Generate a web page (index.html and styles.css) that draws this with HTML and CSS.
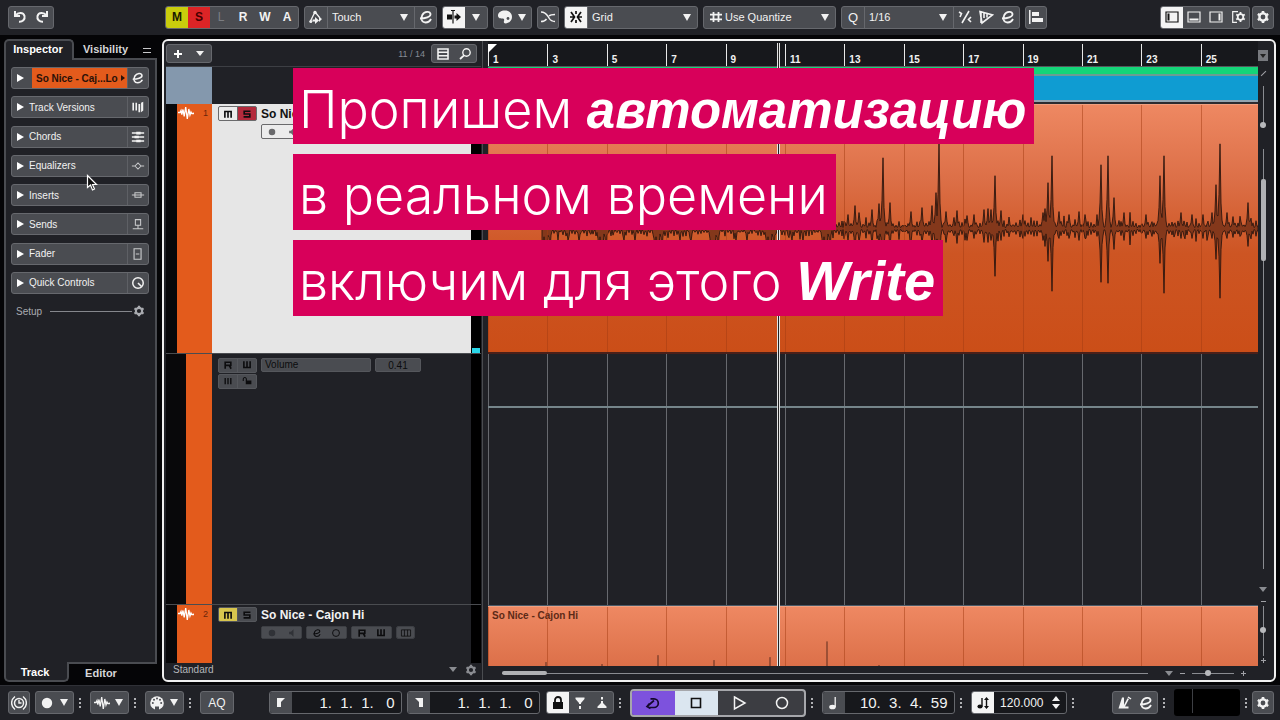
FILE: index.html
```html
<!DOCTYPE html>
<html lang="ru">
<head>
    <meta charset="UTF-8">
    <meta name="viewport" content="width=device-width, initial-scale=1.0">
    <title>Project</title>
    <link rel="stylesheet" href="styles.css">
</head>
<body>

<!-- Icon set -->
<svg class="sprite" aria-hidden="true">
    <symbol id="i-undo" viewBox="0 0 16 16"><path d="M3 2v5h5M3.500 6.500C6 3 11.500 3 12.500 7c.8 3.500-2 6-5.500 5.800" fill="none" stroke="currentColor" stroke-width="2"/></symbol>
    <symbol id="i-redo" viewBox="0 0 16 16"><path d="M13 2v5H8M12.500 6.500C10 3 4.500 3 3.500 7c-.8 3.500 2 6 5.500 5.800" fill="none" stroke="currentColor" stroke-width="2"/></symbol>
    <symbol id="i-edit" viewBox="0 0 16 16"><path d="M2 9.500C7 9.500 13 8 12.500 5 12 2 6.500 2 4.300 6 2.300 10 4 13.500 7.500 13.500c2.500 0 4.500-1.500 5.500-3.500" fill="none" stroke="currentColor" stroke-width="1.800"/></symbol>
    <symbol id="i-auto" viewBox="0 0 16 16"><path d="M2 13L7 3l5 6" fill="none" stroke="currentColor" stroke-width="1.300"/><circle cx="7" cy="3.500" r="1.700" fill="currentColor"/><circle cx="2.800" cy="12.500" r="1.500" fill="currentColor"/><path d="M7 8v2.500H4.500v2H7V15l4-3.500zM11 8l3 2-3 3z" fill="currentColor"/></symbol>
    <symbol id="i-scroll" viewBox="0 0 16 16"><path d="M1 5.500h5v5H1zM8.500 6.500h2V4l4.500 4-4.500 4V9.500h-2z" fill="currentColor"/><path d="M5 1.500h4M7 1.500v13" stroke="currentColor" stroke-width="1.200"/></symbol>
    <symbol id="i-palette" viewBox="0 0 16 16"><path d="M1 6.500C1 3.500 4 1.500 8 1.500c4.500 0 7 3 7 6.500s-3 6.500-6.500 6.500c-1.500 0-2-1-1.500-2.500s0-2.500-1.500-2.500S1 9.500 1 6.500z" fill="currentColor"/><circle cx="11" cy="9.500" r="1.400" fill="#4c4e53"/></symbol>
    <symbol id="i-fade" viewBox="0 0 16 16"><path d="M1 3c5 0 6 3 8 6 1.500 2.500 3 3.500 6 3.500M1 12.500c3 0 4.500-1 5.500-2.500M9 7C10.500 5.500 12 5.500 15 5.500" fill="none" stroke="currentColor" stroke-width="1.400"/></symbol>
    <symbol id="i-snap" viewBox="0 0 16 16"><path d="M8 2v3M8 11v3M3 3l3.500 5L3 13M13 3L9.500 8l3.500 5M2 8h4M10 8h4" fill="none" stroke="currentColor" stroke-width="1.700"/></symbol>
    <symbol id="i-grid" viewBox="0 0 16 16"><path d="M5.500 3v10M10.500 3v10M2 5.700h12M2 10.300h12" stroke="currentColor" stroke-width="1.800"/></symbol>
    <symbol id="i-swing" viewBox="0 0 16 16"><path d="M12 2L5 14M2 3l2.500 1.500L3 8M14 8l-2.500 2.500L14 13" fill="none" stroke="currentColor" stroke-width="1.600"/></symbol>
    <symbol id="i-quant" viewBox="0 0 16 16"><path d="M2 2.500l12.500 3.500L4 14zM3 2v12M6 4v5M9 4.500v4" fill="none" stroke="currentColor" stroke-width="1.600"/></symbol>
    <symbol id="i-align" viewBox="0 0 16 16"><path d="M1.800 1v14" stroke="currentColor" stroke-width="1.500"/><path d="M4 3h7v4H4zM4 9h11v4H4z" fill="currentColor"/></symbol>
    <symbol id="i-left" viewBox="0 0 16 16"><path d="M2 3h12v10H2z" fill="none" stroke="currentColor" stroke-width="1.200"/><path d="M3.500 4.500h2v7h-2z" fill="currentColor"/></symbol>
    <symbol id="i-bottom" viewBox="0 0 16 16"><path d="M2 3h12v10H2z" fill="none" stroke="currentColor" stroke-width="1.200"/><path d="M3.500 9.500h9v2h-9z" fill="currentColor"/></symbol>
    <symbol id="i-right" viewBox="0 0 16 16"><path d="M2 3h12v10H2z" fill="none" stroke="currentColor" stroke-width="1.200"/><path d="M10.500 4.500h2v7h-2z" fill="currentColor"/></symbol>
    <symbol id="i-gear" viewBox="0 0 16 16"><circle cx="8" cy="8" r="3.600" fill="none" stroke="currentColor" stroke-width="2.400"/><path d="M8 2v2M8 12v2M2.800 5l1.700 1M11.500 10l1.700 1M2.800 11l1.700-1M11.500 6l1.700-1" stroke="currentColor" stroke-width="2.600"/></symbol>
    <symbol id="i-winset" viewBox="0 0 16 16"><path d="M8 2.700H2.700v10.600H7" fill="none" stroke="currentColor" stroke-width="1.200"/><circle cx="10.500" cy="8" r="2.800" fill="none" stroke="currentColor" stroke-width="1.800"/><path d="M10.500 3v2M10.500 11v2M6.200 5.500l1.800 1M13 9.500l1.800 1M6.200 10.500l1.800-1M13 6.500l1.800-1" stroke="currentColor" stroke-width="1.800"/></symbol>
    <symbol id="i-versions" viewBox="0 0 16 16"><path d="M2.500 3v9M6 3v9" stroke="currentColor" stroke-width="1.800"/><path d="M8.500 4.500h2V14h-2zM11.500 3L14 2v10l-2.500 2z" fill="currentColor"/></symbol>
    <symbol id="i-chords" viewBox="0 0 16 16"><path d="M1 3.500h14M1 8h14M1 12.500h14" stroke="currentColor" stroke-width="1.800"/><path d="M6 2h5v3H6zM4 6.500h5v3H4zM6 11h5v3H6z" fill="currentColor"/></symbol>
    <symbol id="i-eq" viewBox="0 0 16 16"><path d="M1 8h3.500L8 4.500 11.500 8H15M4.500 8L8 11.500 11.500 8" fill="none" stroke="currentColor" stroke-width="1.200"/></symbol>
    <symbol id="i-insert" viewBox="0 0 16 16"><path d="M1 8h3.500M11.500 8H15M4.500 5.500h7v5h-7zM4.500 8h7" fill="none" stroke="currentColor" stroke-width="1.200"/></symbol>
    <symbol id="i-send" viewBox="0 0 16 16"><path d="M5 3h6v6.500H5zM8 9.500v3.500M2 13.500h12" fill="none" stroke="currentColor" stroke-width="1.200"/></symbol>
    <symbol id="i-fader" viewBox="0 0 16 16"><path d="M3.500 2h8v12h-8zM5.500 8h4" fill="none" stroke="currentColor" stroke-width="1.300"/></symbol>
    <symbol id="i-knob" viewBox="0 0 16 16"><circle cx="8" cy="8" r="6" fill="none" stroke="currentColor" stroke-width="1.700"/><path d="M8 8l4 4" stroke="currentColor" stroke-width="1.800"/></symbol>
    <symbol id="i-wave" viewBox="0 0 16 16"><path d="M0 7.500h2l1-2 .8 4 1.200-5 1.200 7L7.700 2l1.600 12L10.800 4l1.200 6 1-3 .8 1.500H16v-1" fill="none" stroke="currentColor" stroke-width="1.300"/></symbol>
    <symbol id="i-list" viewBox="0 0 16 16"><path d="M3 3h10v10H3zM3 6.300h10M3 9.700h10" fill="none" stroke="currentColor" stroke-width="1.600"/></symbol>
    <symbol id="i-search" viewBox="0 0 16 16"><circle cx="9.500" cy="6.500" r="3.700" fill="none" stroke="currentColor" stroke-width="1.400"/><path d="M7 9.300L3 13" stroke="currentColor" stroke-width="1.800"/></symbol>
    <symbol id="i-clock" viewBox="0 0 16 16"><circle cx="8" cy="8" r="4.500" fill="none" stroke="currentColor" stroke-width="1.500"/><path d="M8 5v3h2.500M4 1.500C-.5 5-.5 11 4 14.500M12 1.500c4.500 3.500 4.500 9.500 0 13" fill="none" stroke="currentColor" stroke-width="1.400"/></symbol>
    <symbol id="i-dot" viewBox="0 0 16 16"><circle cx="8" cy="8" r="5.200" fill="currentColor"/></symbol>
    <symbol id="i-ring" viewBox="0 0 16 16"><circle cx="8" cy="8" r="5.500" fill="none" stroke="currentColor" stroke-width="1.500"/></symbol>
    <symbol id="i-midi" viewBox="0 0 16 16"><circle cx="8" cy="8" r="6.800" fill="currentColor"/><g fill="#4c4e53"><circle cx="3.800" cy="8" r="1"/><circle cx="5" cy="4.800" r="1"/><circle cx="8" cy="3.500" r="1"/><circle cx="11" cy="4.800" r="1"/><circle cx="12.200" cy="8" r="1"/><path d="M6 11.500h4V15H6z"/></g></symbol>
    <symbol id="i-locl" viewBox="0 0 16 16"><path d="M4 3h8L8 7v5H4z" fill="currentColor"/></symbol>
    <symbol id="i-locr" viewBox="0 0 16 16"><path d="M12 3H4l4 4v5h4z" fill="currentColor"/></symbol>
    <symbol id="i-lock" viewBox="0 0 16 16"><path d="M3 7h10v7H3z" fill="currentColor"/><path d="M5 7.500V5a3 3 0 0 1 6 0v2.500" fill="none" stroke="currentColor" stroke-width="1.800"/></symbol>
    <symbol id="i-unlock" viewBox="0 0 16 16"><path d="M6 7h9v6H6z" fill="currentColor"/><path d="M2 8V5a2.500 2.500 0 0 1 5 0v3" fill="none" stroke="currentColor" stroke-width="1.700"/></symbol>
    <symbol id="i-punchin" viewBox="0 0 16 16"><path d="M3.500 2.500h9v1.500L9 8v1H7V8L3.500 4zM7 11h2v3H7z" fill="currentColor"/></symbol>
    <symbol id="i-punchout" viewBox="0 0 16 16"><path d="M7 2h2v2.500H7zM7 6h2v2l3.500 3.500V13h-9v-1.500L7 8z" fill="currentColor"/></symbol>
    <symbol id="i-cycle" viewBox="0 0 16 16"><path d="M3 12.500h6a4.300 4.300 0 0 0 0-8.600H5.500M9 5.500L2 11.500M5.500 13.500L2 11.500l2.500-3" fill="none" stroke="currentColor" stroke-width="1.700"/></symbol>
    <symbol id="i-stop" viewBox="0 0 16 16"><path d="M3.500 3.500h9v9h-9z" fill="none" stroke="currentColor" stroke-width="1.600"/></symbol>
    <symbol id="i-play" viewBox="0 0 16 16"><path d="M3.500 2l10.500 6-10.500 6z" fill="none" stroke="currentColor" stroke-width="1.500"/></symbol>
    <symbol id="i-note" viewBox="0 0 16 16"><ellipse cx="6.500" cy="12" rx="3.300" ry="2.300" fill="currentColor"/><path d="M9.200 12V2" stroke="currentColor" stroke-width="1.300"/></symbol>
    <symbol id="i-tempo" viewBox="0 0 16 16"><ellipse cx="5" cy="11.500" rx="2.600" ry="2" fill="currentColor"/><path d="M7 11.500V3M11.500 4v8" stroke="currentColor" stroke-width="1.400"/><path d="M9 5l2.500-3L14 5zM9 11l2.500 3 2.500-3z" fill="currentColor"/></symbol>
    <symbol id="i-metro" viewBox="0 0 16 16"><path d="M2.500 13.500h10v-2H9L13 4l-1.500-.8L8 10V2.500H6z" fill="currentColor"/><path d="M12 2l3 2" stroke="currentColor" stroke-width="1.500"/></symbol>
    <symbol id="i-speaker" viewBox="0 0 16 16"><path d="M5 6h3l4-4v12L8 10H5z" fill="currentColor"/></symbol>
    <symbol id="i-lanes" viewBox="0 0 16 16"><path d="M.700 3h14.600v10H.700zM5.500 3v10M10.500 3v10" fill="none" stroke="currentColor" stroke-width="1.300"/></symbol>
    <symbol id="i-bars" viewBox="0 0 16 16"><path d="M3.500 3v10M8 3v10M12.500 3v10" stroke="currentColor" stroke-width="2.200"/></symbol>
    <symbol id="i-s" viewBox="0 0 16 16"><path d="M13.500 3.500h-10V8h9v4.500h-10" fill="none" stroke="currentColor" stroke-width="2.600"/></symbol>
    <symbol id="i-m" viewBox="0 0 16 16"><path d="M3 14V4h10v10M8 4v10" fill="none" stroke="currentColor" stroke-width="2.600"/></symbol>
    <symbol id="i-r" viewBox="0 0 16 16"><path d="M3.500 14V3.500h9v5h-9M10 8.500l3 5.500" fill="none" stroke="currentColor" stroke-width="2.600"/></symbol>
    <symbol id="i-w" viewBox="0 0 16 16"><path d="M3 2v10h10V2M8 2v10" fill="none" stroke="currentColor" stroke-width="2.600"/></symbol>
</svg>

<header class="toolbar">
    <div class="tool-side">
        <div class="group">
            <button aria-label="Undo"><svg><use href="#i-undo"/></svg></button>
            <button aria-label="Redo"><svg><use href="#i-redo"/></svg></button>
        </div>
    </div>
    <div class="tools">
        <div class="group states">
            <button class="mute">M</button>
            <button class="solo">S</button>
            <button class="off">L</button>
            <button>R</button>
            <button>W</button>
            <button>A</button>
        </div>
        <div class="group">
            <button aria-label="Automation"><svg><use href="#i-auto"/></svg></button>
            <label class="drop w-touch"><select aria-label="Automation mode"><option>Touch</option></select></label>
            <button class="split" aria-label="Automation panel"><svg><use href="#i-edit"/></svg></button>
        </div>
        <div class="group">
            <button class="on" aria-label="Auto-scroll"><svg><use href="#i-scroll"/></svg></button>
            <button aria-label="Auto-scroll settings"><i class="caret"></i></button>
        </div>
        <div class="group">
            <button aria-label="Color"><svg><use href="#i-palette"/></svg></button>
            <button class="slim" aria-label="Select color"><i class="caret"></i></button>
        </div>
        <div class="group">
            <button aria-label="Snap to zero crossing"><svg><use href="#i-fade"/></svg></button>
        </div>
        <div class="group">
            <button class="on" aria-label="Snap"><svg><use href="#i-snap"/></svg></button>
            <label class="drop w-grid"><select aria-label="Snap type"><option>Grid</option></select></label>
        </div>
        <div class="group">
            <label class="drop w-use"><svg><use href="#i-grid"/></svg><select aria-label="Grid type"><option>Use Quantize</option></select></label>
        </div>
        <div class="group">
            <button class="letter">Q</button>
            <label class="drop w-quant"><select aria-label="Quantize preset"><option>1/16</option></select></label>
            <button class="split" aria-label="Swing"><svg><use href="#i-swing"/></svg></button>
            <button aria-label="Iterative quantize"><svg><use href="#i-quant"/></svg></button>
            <button aria-label="Quantize panel"><svg><use href="#i-edit"/></svg></button>
        </div>
        <div class="group">
            <button aria-label="Align"><svg><use href="#i-align"/></svg></button>
        </div>
    </div>
    <div class="tools">
        <div class="group">
            <button class="on" aria-label="Left zone"><svg><use href="#i-left"/></svg></button>
            <button aria-label="Lower zone"><svg><use href="#i-bottom"/></svg></button>
            <button aria-label="Right zone"><svg><use href="#i-right"/></svg></button>
            <button aria-label="Window layout"><svg><use href="#i-winset"/></svg></button>
        </div>
        <div class="group">
            <button aria-label="Toolbar setup"><svg><use href="#i-gear"/></svg></button>
        </div>
    </div>
</header>

<main class="workspace">
    <!-- Left zone -->
    <aside class="inspector">
        <nav class="tabs top">
            <button class="tab active">Inspector</button>
            <button class="tab">Visibility</button>
            <button class="tab menu" aria-label="Tab menu"><i></i></button>
        </nav>
        <div class="panel">
            <div class="sections">
                <div class="section selected"><button class="name"><i class="tri"></i><span>So Nice - Caj...Lo</span></button><button class="side" aria-label="Edit channel"><svg><use href="#i-edit"/></svg></button></div>
                <div class="section"><button class="name"><i class="tri"></i>Track Versions</button><button class="side" aria-label="Versions"><svg><use href="#i-versions"/></svg></button></div>
                <div class="section"><button class="name"><i class="tri"></i>Chords</button><button class="side" aria-label="Chords"><svg><use href="#i-chords"/></svg></button></div>
                <div class="section"><button class="name"><i class="tri"></i>Equalizers</button><button class="side dim" aria-label="Bypass EQ"><svg><use href="#i-eq"/></svg></button></div>
                <div class="section"><button class="name"><i class="tri"></i>Inserts</button><button class="side dim" aria-label="Bypass inserts"><svg><use href="#i-insert"/></svg></button></div>
                <div class="section"><button class="name"><i class="tri"></i>Sends</button><button class="side dim" aria-label="Bypass sends"><svg><use href="#i-send"/></svg></button></div>
                <div class="section"><button class="name"><i class="tri"></i>Fader</button><button class="side dim" aria-label="Fader"><svg><use href="#i-fader"/></svg></button></div>
                <div class="section"><button class="name"><i class="tri"></i>Quick Controls</button><button class="side" aria-label="Learn"><svg><use href="#i-knob"/></svg></button></div>
            </div>
            <div class="setup"><span>Setup</span><i></i><svg><use href="#i-gear"/></svg></div>
        </div>
        <nav class="tabs bottom">
            <button class="tab active">Track</button>
            <button class="tab">Editor</button>
        </nav>
    </aside>

    <!-- Project zone -->
    <section class="project">
        <div class="tracklist">
            <div class="list-head">
                <div class="group small">
                    <button aria-label="Add track"><svg viewBox="0 0 16 16"><path d="M8 4v8M4 8h8" stroke="#fff" stroke-width="2"/></svg></button>
                    <button aria-label="Track presets"><i class="caret wide"></i></button>
                </div>
                <span class="count">11 / 14</span>
                <div class="group small">
                    <button aria-label="Filter tracks"><svg><use href="#i-list"/></svg></button>
                    <button aria-label="Find tracks"><svg><use href="#i-search"/></svg></button>
                </div>
            </div>
            <div class="row folder"><i class="swatch"></i></div>
            <div class="row track first">
                <div class="color"><svg><use href="#i-wave"/></svg><span>1</span></div>
                <div class="body">
                    <div class="line">
                        <div class="ms"><button class="m" aria-label="Mute"><svg><use href="#i-m"/></svg></button><button class="s" aria-label="Solo"><svg><use href="#i-s"/></svg></button></div>
                        <b>So Nice - Cajon Lo</b>
                    </div>
                    <div class="line controls">
                        <div class="pair"><button aria-label="Record"><svg><use href="#i-dot"/></svg></button><button aria-label="Monitor"><svg><use href="#i-speaker"/></svg></button></div>
                    </div>
                </div>
                <div class="meter"><i></i></div>
            </div>
            <div class="row automation">
                <div class="color"></div>
                <div class="body">
                    <div class="line">
                        <div class="ms"><button aria-label="Read"><svg><use href="#i-r"/></svg></button><button aria-label="Write"><svg><use href="#i-w"/></svg></button></div>
                        <select class="param" aria-label="Parameter"><option>Volume</option></select>
                        <input class="value" type="text" value="0.41" aria-label="Value">
                    </div>
                    <div class="line">
                        <div class="ms"><button aria-label="Suspend"><svg><use href="#i-bars"/></svg></button><button aria-label="Lock"><svg><use href="#i-unlock"/></svg></button></div>
                    </div>
                </div>
                <div class="meter"></div>
            </div>
            <div class="row track second">
                <div class="color"><svg><use href="#i-wave"/></svg><span>2</span></div>
                <div class="body">
                    <div class="line">
                        <div class="ms"><button class="m" aria-label="Mute"><svg><use href="#i-m"/></svg></button><button aria-label="Solo"><svg><use href="#i-s"/></svg></button></div>
                        <b>So Nice - Cajon Hi</b>
                    </div>
                    <div class="line controls">
                        <div class="pair"><button aria-label="Record"><svg><use href="#i-dot"/></svg></button><button aria-label="Monitor"><svg><use href="#i-speaker"/></svg></button></div>
                        <div class="pair ink"><button aria-label="Edit"><svg><use href="#i-edit"/></svg></button><button aria-label="Freeze"><svg><use href="#i-ring"/></svg></button></div>
                        <div class="pair ink"><button aria-label="Read"><svg><use href="#i-r"/></svg></button><button aria-label="Write"><svg><use href="#i-w"/></svg></button></div>
                        <div class="pair ink one"><button aria-label="Lanes"><svg class="lanes"><use href="#i-lanes"/></svg></button></div>
                    </div>
                </div>
                <div class="meter"></div>
            </div>
            <div class="list-foot">
                <span>Standard</span>
                <i class="caret wide"></i>
                <svg><use href="#i-gear"/></svg>
            </div>
        </div>

        <div class="timeline">
            <div class="ruler"><i class="start"></i></div>
            <div class="markers"><i class="green"></i><i class="blue"></i></div>
            <div class="lane audio"><svg class="wave" id="wave" viewBox="0 0 770 248" preserveAspectRatio="none"></svg><div class="bars"></div></div>
            <div class="lane auto"><div class="bars"></div><i class="curve"></i></div>
            <div class="lane audio last"><span class="clip-name">So Nice - Cajon Hi</span><svg class="wave" id="wave2" viewBox="0 0 770 60" preserveAspectRatio="none"></svg><div class="bars"></div></div>
            <div class="hscroll">
                <div class="track-line"><i></i></div>
                <i class="caret wide"></i>
                <span class="minus"></span>
                <input type="range" value="36" aria-label="Horizontal zoom">
                <span class="plus"></span>
            </div>
            <i class="playhead"></i>
        </div>

        <div class="vscroll">
            <button class="box" aria-label="Divide track list"><i class="caret wide"></i></button>
            <i class="slash"></i>
            <input class="wavezoom" type="range" value="100" aria-label="Waveform zoom">
            <div class="track-line"><i></i></div>
            <i class="caret wide"></i>
            <span class="minus"></span>
            <input type="range" value="48" aria-label="Vertical zoom">
            <span class="plus"></span>
        </div>
    </section>
</main>

<footer class="transport">
    <div class="tools">
        <div class="group"><button aria-label="Constrain delay"><svg><use href="#i-clock"/></svg></button></div>
        <div class="group"><button aria-label="Record mode"><svg><use href="#i-dot"/></svg></button><button class="slim" aria-label="Record options"><i class="caret"></i></button></div>
        <i class="grip"></i>
        <div class="group"><button aria-label="Audio record mode"><svg><use href="#i-wave"/></svg></button><button class="slim" aria-label="Audio options"><i class="caret"></i></button></div>
        <i class="grip"></i>
        <div class="group"><button aria-label="MIDI record mode"><svg><use href="#i-midi"/></svg></button><button class="slim" aria-label="MIDI options"><i class="caret"></i></button></div>
        <i class="grip"></i>
        <div class="group"><button class="aq">AQ</button></div>
    </div>
    <div class="tools position">
        <div class="group field"><button aria-label="Left locator"><svg><use href="#i-locl"/></svg></button><input type="text" value="1.&nbsp;&nbsp;1.&nbsp;&nbsp;1.&nbsp;&nbsp;&nbsp;0" aria-label="Left locator position"></div>
        <div class="group field"><button aria-label="Right locator"><svg><use href="#i-locr"/></svg></button><input type="text" value="1.&nbsp;&nbsp;1.&nbsp;&nbsp;1.&nbsp;&nbsp;&nbsp;0" aria-label="Right locator position"></div>
        <div class="group punch"><button class="on" aria-label="Lock punch"><svg><use href="#i-lock"/></svg></button><button aria-label="Punch in"><svg><use href="#i-punchin"/></svg></button><button aria-label="Punch out"><svg><use href="#i-punchout"/></svg></button></div>
        <i class="grip"></i>
        <div class="deck">
            <button class="cycle" aria-label="Cycle"><svg><use href="#i-cycle"/></svg></button>
            <button class="stop" aria-label="Stop"><svg><use href="#i-stop"/></svg></button>
            <button aria-label="Play"><svg><use href="#i-play"/></svg></button>
            <button aria-label="Record"><svg><use href="#i-ring"/></svg></button>
        </div>
        <i class="grip"></i>
        <div class="group field"><button aria-label="Time format"><svg><use href="#i-note"/></svg></button><input type="text" value="10.&nbsp;&nbsp;3.&nbsp;&nbsp;4.&nbsp;&nbsp;59" aria-label="Time"></div>
        <i class="grip"></i>
        <div class="group field tempo"><button class="on" aria-label="Tempo track"><svg><use href="#i-tempo"/></svg></button><input type="text" value="120.000" aria-label="Tempo"><i class="step"></i></div>
        <i class="grip"></i>
    </div>
    <div class="tools">
        <div class="group"><button aria-label="Metronome"><svg><use href="#i-metro"/></svg></button><button aria-label="Metronome setup"><svg><use href="#i-edit"/></svg></button></div>
        <i class="grip"></i>
        <div class="level"><i></i></div>
        <i class="grip"></i>
        <div class="group"><button aria-label="Transport setup"><svg><use href="#i-gear"/></svg></button></div>
    </div>
</footer>

<!-- Lesson caption -->
<div class="caption">
    <p>Пропишем <b>автоматизацию</b></p>
    <p>в реальном времени</p>
    <p>включим для этого <b class="term">Write</b></p>
</div>

<svg class="pointer" viewBox="0 0 12 18"><path d="M1.500 1.500v12l3-2.500 2 5 2-1-2-4.500h4z" fill="#111" stroke="#fff" stroke-width="1.200"/></svg>

<script src="script.js"></script>
</body>
</html>
```

FILE: styles.css
```css
* {
    box-sizing: border-box;
}

body {
    margin: 0;
    height: 100vh;
    overflow: hidden;
    position: relative;
    display: flex;
    flex-direction: column;
    background: #050507;
    color: #f2f2f2;
    font-family: "Liberation Sans", Arial, sans-serif;
    font-size: 11px;
}

button,
input,
select {
    margin: 0;
    padding: 0;
    border: 0;
    background: none;
    color: inherit;
    font: inherit;
    appearance: none;
}

svg {
    display: block;
    width: 16px;
    height: 16px;
}

.sprite {
    position: absolute;
    width: 0;
    height: 0;
}

/* Toolbars */
.toolbar {
    flex: none;
    display: flex;
    height: 35px;
    padding: 0 6px 1px 8px;
    align-items: center;
    background: #202126;
}

.tool-side {
    width: 157px;
}

.tools {
    display: flex;
    align-items: center;
    gap: 5px;
}

.toolbar .tools:last-child {
    margin-left: auto;
    gap: 2px;
}

.group {
    display: flex;
    width: max-content;
    height: 23px;
    border: 1px solid #66686d;
    border-radius: 3px;
    background: #4a4c51;
    overflow: hidden;
}

.group button {
    display: flex;
    align-items: center;
    justify-content: center;
    width: 22px;
}

.group button:only-child {
    width: 20px;
}

.group .on {
    background: #f4f4f4;
    color: #111;
}

.group .slim {
    width: 15px;
}

.slim .caret {
    margin-right: 4px;
}

.group .split {
    border-left: 1px solid #66686d;
}

.letter {
    font-size: 13px;
}

.states button {
    font-size: 12px;
    font-weight: bold;
}

.group .mute {
    background: #c9cd0c;
    color: #1a1a00;
}

.group .solo {
    background: #dc2426;
    color: #400;
}

.states .off {
    color: #7b7d82;
    font-weight: normal;
}

.caret {
    width: 0;
    border: 4px solid transparent;
    border-top: 7px solid #f2f2f2;
    border-bottom: 0;
}

.caret.wide {
    border-top-width: 5px;
}

.drop {
    position: relative;
    display: flex;
    align-items: center;
    padding-left: 4px;
    border-left: 1px solid #66686d;
}

.drop select {
    flex: 1;
    height: 100%;
    cursor: pointer;
}

.drop svg {
    margin-right: 1px;
}

.drop::after {
    content: "";
    position: absolute;
    right: 6px;
    border: 4px solid transparent;
    border-top: 7px solid #f2f2f2;
    border-bottom: 0;
    pointer-events: none;
}

.w-touch {
    width: 87px;
}

.w-grid {
    width: 110px;
}

.w-use {
    width: 131px;
    border-left: 0;
}

.w-quant {
    width: 89px;
}

/* Workspace */
.workspace {
    flex: 1;
    min-height: 0;
    display: flex;
    gap: 5px;
    padding: 4px 4px 3px 4px;
}

/* Inspector */
.inspector {
    width: 153px;
    display: flex;
    flex-direction: column;
}

.tabs {
    display: flex;
}

.tab {
    height: 21px;
    font-weight: bold;
    text-align: center;
    color: #d6d6d8;
}

.tab.active {
    width: 70px;
    padding: 0 2px 3px 0;
    color: #fff;
    background: #202126;
    border: 2px solid #4a4c51;
    border-bottom: 0;
    border-radius: 5px 5px 0 0;
}

.tabs.top .tab:nth-child(2) {
    flex: 1;
    border-bottom: 2px solid #4a4c51;
}

.tabs .menu {
    width: 20px;
    border-bottom: 2px solid #4a4c51;
}

.menu i {
    display: block;
    width: 8px;
    height: 5px;
    margin: 3px 0 0 6px;
    border: solid #c8c8ca;
    border-width: 1px 0;
}

.tabs.bottom .tab.active {
    width: 65px;
    padding: 2px 3px 0 0;
    border: 2px solid #4a4c51;
    border-top: 0;
    border-radius: 0 0 5px 5px;
}

.tabs.bottom .tab {
    height: 20px;
}

.tabs.bottom .tab:last-child {
    flex: 1;
    padding-right: 24px;
    border-top: 2px solid #4a4c51;
}

.panel {
    flex: 1;
    padding: 7px 6px 0 5px;
    background: #202126;
    border: solid #4a4c51;
    border-width: 0 2px;
}

.sections {
    display: grid;
    align-content: space-between;
    height: 227px;
}

.section {
    display: flex;
    height: 22px;
    border: 1px solid #66686d;
    border-radius: 3px;
    background: #4a4c51;
    font-size: 10px;
    overflow: hidden;
}

.section .name {
    flex: 1;
    display: flex;
    align-items: center;
    gap: 5px;
    padding-left: 5px;
}

.section.selected .name {
    font-weight: bold;
    gap: 8px;
}

.selected span {
    flex: 1;
    align-self: stretch;
    display: flex;
    align-items: center;
    justify-content: space-between;
    padding: 0 2px 0 4px;
    background: #e35b1c;
    color: #2b1108;
    white-space: nowrap;
}

.selected span::after {
    content: "";
    border: 3px solid transparent;
    border-left: 4px solid #2b1108;
    border-right: 0;
}

.tri {
    border: 4px solid transparent;
    border-left: 7px solid #fff;
    border-right: 0;
}

.section .side {
    width: 21px;
    display: flex;
    align-items: center;
    justify-content: center;
    border-left: 1px solid #5e6065;
}

.section .side svg {
    width: 14px;
}

.side.dim {
    color: #c9cacc;
}

.setup {
    display: flex;
    align-items: center;
    gap: 8px;
    padding: 9px 3px 0 5px;
    color: #a9abb0;
    font-size: 10px;
}

.setup i {
    flex: 1;
    height: 1px;
    background: #85878c;
}

.setup svg {
    width: 14px;
    margin-left: -8px;
}

/* Project window */
.project {
    flex: 1;
    min-width: 0;
    display: grid;
    grid-template-columns: 315px 1fr 16px;
    padding-left: 2px;
    border: 2px solid #f0f0f0;
    border-radius: 6px;
    background: #202126;
}

.tracklist {
    display: flex;
    flex-direction: column;
}

.list-head {
    display: flex;
    align-items: center;
    height: 26px;
    padding-right: 4px;
    border-bottom: 1px solid #3d3f44;
}

.group.small {
    height: 19px;
}

.count {
    margin: 0 6px 0 auto;
    color: #858b95;
    font-size: 9px;
}

.row {
    display: flex;
    border-bottom: 1px solid #4a4c50;
}

.folder {
    height: 37px;
    border-bottom: 0;
}

.swatch {
    width: 46px;
    background: #8498ad;
}

.track,
.automation {
    height: 250px;
}

.track .color {
    width: 46px;
    display: flex;
    justify-content: space-between;
    padding: 1px 4px 0 1px;
    border-left: 11px solid #08080a;
    background: #e35b1c;
    color: #6b250a;
    font-size: 9px;
}

.color svg {
    color: #fff;
}

.color span {
    margin-top: 3px;
}

.body {
    flex: 1;
    min-width: 0;
    padding: 2px 0 0 6px;
}

.first .body {
    background: #e6e6e6;
    color: #111;
}

.line {
    display: flex;
    align-items: center;
    gap: 4px;
    height: 15px;
    font-size: 12px;
}

.ms,
.pair {
    display: flex;
    width: 39px;
    height: 15px;
    border: 1px solid #55575c;
    border-radius: 2px;
    background: #55575c;
    color: #0c0c0e;
    gap: 1px;
    overflow: hidden;
}

.ms button,
.pair button {
    flex: 1;
    display: flex;
    align-items: center;
    justify-content: center;
    background: #4a4c51;
}

.ms svg,
.pair svg {
    width: 10px;
    height: 10px;
}

.first .ms,
.first .pair {
    border-color: #6a6a6c;
    background: #6a6a6c;
}

.first button {
    background: #ececec;
}

.first .s {
    background: #b32a3c;
}

.first .pair {
    gap: 0;
    height: 15px;
    color: #6a6a6c;
}

.second .m {
    background: #d8c64e;
}

.controls {
    margin-top: 3px;
    padding-left: 43px;
}

.pair {
    width: 41px;
    height: 13px;
    gap: 0;
    border-color: #3d3f44;
    color: #303237;
}

.pair.ink {
    color: #0c0c0e;
}

.pair.one {
    width: 19px;
}

.pair .lanes {
    width: 14px;
}

.meter {
    width: 10px;
    display: flex;
    align-items: flex-end;
    background: #000;
}

.meter i {
    width: 8px;
    height: 5px;
    margin: 0 1px;
    background: #29d7e8;
}

.automation {
    height: 251px;
}

.automation .color {
    width: 46px;
    border-left: 20px solid #08080a;
    background: #e35b1c;
}

.automation .body {
    padding-top: 3px;
}

.automation .line {
    height: 16px;
}

.param,
.value {
    width: 110px;
    height: 14px;
    padding-left: 3px;
    border: 1px solid #55575c;
    border-radius: 2px;
    background: #4a4c51;
    color: #0c0c0e;
    font-size: 10px;
    line-height: 12px;
}

.value {
    width: 46px;
    padding: 0;
    text-align: center;
}

.track.second {
    flex: 1;
    height: auto;
    border-bottom: 0;
}

.list-foot {
    display: flex;
    align-items: center;
    gap: 7px;
    height: 17px;
    padding: 0 3px 4px 7px;
    color: #b4b6ba;
    font-size: 10px;
}

.list-foot span {
    margin-right: auto;
}

.list-foot .caret,
.hscroll .caret,
.vscroll .caret {
    border-top-color: #8a8c91;
}

.list-foot svg {
    width: 14px;
    color: #8a8c91;
}

/* Timeline */
.timeline {
    position: relative;
    min-width: 0;
    display: flex;
    flex-direction: column;
    margin-left: 1px;
    padding-left: 5px;
    border-left: 1px solid #4a4c50;
}

.ruler,
.bars {
    display: grid;
    grid-template-columns: repeat(12, 28fr) 27fr;
}

.ruler {
    position: relative;
    height: 26px;
    padding-top: 3px;
    border-bottom: 1px solid #55575c;
    background: #17181c;
}

.ruler span {
    padding: 10px 0 0 4px;
    border-left: 1px solid #e8e8e8;
    font-size: 10px;
    font-weight: bold;
}

.start {
    position: absolute;
    left: 0;
    top: 3px;
    border-top: 9px solid #fff;
    border-right: 9px solid transparent;
}

.markers {
    height: 37px;
    display: flex;
    flex-direction: column;
    background: #2c2b30;
}

.green {
    height: 9px;
    background: #14d578;
    border-bottom: 2px solid #6c9c94;
}

.blue {
    height: 26px;
    background: #0f9cd2;
    border-bottom: 2px solid #94a4b0;
}

.lane {
    position: relative;
    height: 250px;
    border-bottom: 2px solid #4a2019;
}

.lane.audio {
    background: linear-gradient(#ee8862, #dc6f47 30%, #cd5523 60%, #cb4e18);
    border-top: 1px solid #f0a080;
}

.lane .bars {
    position: absolute;
    inset: 0;
}

.bars span {
    border-left: 1px solid #a33c1180;
}

.lane.auto {
    height: 252px;
    border-bottom: 1px solid #4a5a68;
}

.auto .bars span {
    border-color: #67696e;
}

.curve {
    position: absolute;
    top: 52px;
    width: 100%;
    height: 2px;
    background: #75858a;
}

.lane.last {
    flex: 1;
    border-bottom: 0;
    background: linear-gradient(#ee8862, #dc7049);
}

.clip-name {
    position: absolute;
    top: 3px;
    left: 4px;
    color: #5c2a17;
    font-size: 10px;
    font-weight: bold;
}

.wave {
    position: absolute;
    inset: 0;
    width: 100%;
    height: 100%;
}

.playhead {
    position: absolute;
    top: 2px;
    bottom: 14px;
    left: 38%;
    width: 3px;
    margin-left: -1px;
    border: solid #e4e4e4;
    border-width: 0 1px;
    background: #222;
}

.hscroll {
    display: flex;
    align-items: center;
    gap: 7px;
    height: 14px;
    padding: 0 12px 0 14px;
}

.hscroll .track-line {
    flex: 1;
    display: flex;
    align-items: center;
    height: 1px;
    margin-right: 10px;
    background: #8a8c91;
}

.hscroll .track-line i {
    width: 45px;
    height: 4px;
    border-radius: 2px;
    background: #b0b1b4;
}

.minus,
.plus {
    position: relative;
    width: 5px;
    height: 1px;
    background: #a0a1a6;
}

.plus::after {
    content: "";
    position: absolute;
    left: 2px;
    top: -2px;
    width: 1px;
    height: 5px;
    background: #a0a1a6;
}

input[type="range"] {
    width: 42px;
    height: 6px;
    background: linear-gradient(#8a8c91, #8a8c91) center / 100% 1px no-repeat;
}

input[type="range"]::-webkit-slider-thumb {
    appearance: none;
    width: 6px;
    height: 6px;
    border-radius: 3px;
    background: #b8b9bc;
}

.vscroll {
    display: flex;
    flex-direction: column;
    align-items: center;
    padding: 9px 6px 16px 0;
}

.vscroll .box {
    display: flex;
    align-items: center;
    justify-content: center;
    flex: none;
    width: 10px;
    height: 11px;
    background: #77797e;
}

.vscroll .box .caret {
    border-width: 4px 3px 0;
    border-top-color: #222;
}

.slash {
    width: 7px;
    height: 1px;
    margin: 12px 0;
    background: #a0a1a6;
    transform: rotate(-45deg);
}

.vscroll input {
    flex: none;
    width: 6px;
    height: 50px;
    margin: 4px 0;
    writing-mode: vertical-lr;
    background: linear-gradient(#8a8c91, #8a8c91) center / 1px 100% no-repeat;
}

.vscroll .wavezoom {
    height: 42px;
    margin: 0 0 21px;
}

.vscroll .track-line {
    flex: 1;
    display: flex;
    justify-content: center;
    width: 1px;
    margin-bottom: 18px;
    background: #8a8c91;
}

.vscroll .track-line i {
    flex: none;
    width: 5px;
    height: 82px;
    margin-top: 30px;
    border-radius: 2px;
    background: #b0b1b4;
}

.vscroll .minus {
    margin-top: 9px;
}

.vscroll .plus {
    margin-bottom: 3px;
}

/* Transport */
.transport {
    flex: none;
    display: flex;
    justify-content: space-between;
    align-items: center;
    height: 35px;
    padding: 0 6px 1px 8px;
    border-top: 1px solid #303137;
    background: #202126;
}

.position {
    margin-right: 4px;
}

.grip {
    width: 2px;
    height: 10px;
    margin-right: 4px;
    background: repeating-linear-gradient(#b0b1b4 0 2px, transparent 2px 4px);
}

.grip:last-child,
.level + .grip {
    margin-right: 0;
}

.group .aq:only-child {
    width: 32px;
    font-size: 12px;
}

.field {
    background: #17181c;
}

.field button {
    background: #4a4c51;
}

.field .on {
    background: #f4f4f4;
}

.field input {
    width: 109px;
    padding-right: 6px;
    font-size: 15px;
    text-align: right;
}

.punch {
    margin-left: 1px;
}

.field.tempo input {
    width: 50px;
    padding-right: 0;
    font-size: 12px;
}

.step {
    align-self: center;
    margin: 0 6px 0 8px;
}

.step::before,
.step::after {
    content: "";
    display: block;
    border: 4px solid transparent;
    border-top: 0;
    border-bottom: 5px solid #f2f2f2;
}

.step::after {
    margin-top: 3px;
    transform: scaleY(-1);
}

.deck {
    display: flex;
    height: 28px;
    border: 2px solid #a6a7ab;
    border-radius: 4px;
    background: #3c3d42;
    overflow: hidden;
}

.deck button {
    display: flex;
    align-items: center;
    justify-content: center;
    width: 43px;
}

.deck .cycle {
    background: #7d52dd;
    color: #15092e;
}

.deck .stop {
    background: #dbe6f0;
    color: #111;
}

.level {
    width: 66px;
    height: 27px;
    border-radius: 3px;
    background: #000;
}

.level i {
    display: block;
    width: 19px;
    height: 24px;
    border-right: 1px solid #3d3f44;
}

/* Caption */
.caption {
    position: absolute;
    left: 293px;
    top: 68px;
    display: flex;
    flex-direction: column;
    align-items: flex-start;
    gap: 10px;
}

.caption p {
    margin: 0;
    padding: 7px 8px 0 6px;
    background: #d8005a;
    color: #fff;
    font-family: Inter, "Liberation Sans", sans-serif;
    font-size: 52px;
    font-weight: 300;
    line-height: 69px;
    white-space: nowrap;
}

.caption b {
    font-family: "Liberation Sans", Arial, sans-serif;
    font-size: 51px;
    font-style: italic;
    font-weight: bold;
    line-height: 1;
}

.caption .term {
    font-size: 56px;
}

.pointer {
    position: absolute;
    left: 86px;
    top: 174px;
    width: 12px;
    height: 18px;
}
```

FILE: script.js
```js
// Bar lines and ruler numbers
const BARS = 13;

document.querySelectorAll('.ruler, .bars').forEach(el => {
    for (let i = 0; i < BARS; i++) {
        const cell = document.createElement('span');
        if (el.classList.contains('ruler')) {
            cell.textContent = i * 2 + 1;
        }
        el.appendChild(cell);
    }
});

// Loud hits: x, height above the axis, depth below it
const hits = [
    [367, 23, 22], [384, 19, 16], [391, 25, 18], [395, 71, 60], [402, 26, 20],
    [423, 17, 14], [434, 21, 14], [444, 23, 16], [448, 36, 34], [451, 85, 70], [458, 17, 14],
    [469, 18, 15], [479, 13, 12], [486, 14, 10], [496, 19, 14], [500, 20, 14], [503, 19, 12],
    [507, 53, 48], [513, 18, 12], [535, 14, 10], [555, 16, 12],
    [557, 20, 18], [560, 46, 33], [564, 73, 63], [571, 17, 10], [581, 14, 10], [591, 17, 12],
    [597, 14, 10], [613, 64, 54], [620, 73, 55], [626, 31, 21], [636, 16, 12],
    [658, 14, 10], [672, 53, 35], [676, 73, 65], [693, 16, 10], [704, 14, 10], [715, 14, 10],
    [724, 16, 10], [728, 44, 31], [732, 85, 70], [739, 16, 10], [745, 12, 9], [760, 26, 18]
];
// Repeating hits before the break
for (let x = 58; x < 360; x += 56) {
    hits.push([x - 3, 30, 26], [x, 70, 55], [x + 4, 26, 22], [x + 22, 14, 12], [x + 33, 16, 13]);
}

let seed = 7;
function rand() {
    seed = (seed * 16807) % 2147483647;
    return seed / 2147483647;
}

function drawWave() {
    const axis = 124;
    const up = [];
    const down = [];
    for (let x = 54; x <= 770; x++) {
        const base = x % 3 ? 1 + rand() * 2 : 3 + rand() * 5;
        up.push(base + (x % 11 === 4 ? rand() * 12 : 0));
        down.push(base + (x % 11 === 4 ? rand() * 10 : 0));
    }
    hits.forEach(([x, top, bottom]) => {
        [0.15, 0.4, 1, 0.3, 0.1].forEach((k, i) => {
            const n = x - 54 + i - 2;
            if (n < 0 || n >= up.length) return;
            up[n] = Math.max(up[n], top * k);
            down[n] = Math.max(down[n], bottom * k);
        });
    });
    const top = up.map((v, i) => `${i + 54},${(axis - v).toFixed(1)}`);
    const bottom = down.map((v, i) => `${i + 54},${(axis + v).toFixed(1)}`).reverse();
    document.getElementById('wave').innerHTML =
        `<polygon points="${top.concat(bottom).join(' ')}" fill="#84381b" stroke="#2e160e" stroke-width="0.9"/>`;
}

function drawTicks() {
    const ticks = [[58, 4], [114, 2], [170, 11], [226, 6], [282, 9], [339, 25], [391, 1]];
    document.getElementById('wave2').innerHTML = ticks
        .map(([x, h]) => `<path d="M${x} 60v-${h}" stroke="#5a2c1c" stroke-width="1"/>`)
        .join('');
}

drawWave();
drawTicks();
```
